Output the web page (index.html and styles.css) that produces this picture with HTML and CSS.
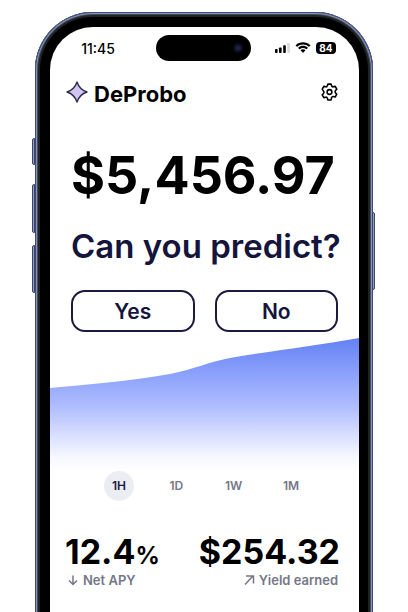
FILE: index.html
```html
<!DOCTYPE html>
<html lang="en">
<head>
<meta charset="utf-8">
<meta name="viewport" content="width=device-width, initial-scale=1">
<title>DeProbo</title>
<link rel="stylesheet" href="styles.css">
</head>
<body>
<div class="phone">
  <span class="side-key key-action"></span>
  <span class="side-key key-up"></span>
  <span class="side-key key-down"></span>
  <span class="side-key key-power"></span>
  <main class="screen">
    <div class="status">
      <time class="clock">11:45</time>
      <div class="island"><span class="camera"></span></div>
      <div class="indicators">
        <svg class="signal" viewBox="0 0 15 10" aria-hidden="true">
          <rect x="0" y="6" width="2.6" height="4" rx=".8"/>
          <rect x="4" y="4.5" width="2.6" height="5.5" rx=".8"/>
          <rect x="8.200" y="2.300" width="2.600" height="7.700" rx=".8"/>
          <rect x="12.300" y="0" width="2.600" height="10" rx=".8" fill="#d9d9db"/>
        </svg>
        <svg class="wifi" viewBox="0 0 16 12" aria-hidden="true">
          <path d="M8 2.500c2.200 0 4.200.9 5.700 2.300.1.100.3.100.4 0l1.200-1.200c.1-.1.100-.3 0-.4C11.300-.6 4.700-.6.7 3.200c-.1.100-.1.300 0 .4l1.200 1.200c.1.100.3.100.4 0C3.800 3.400 5.800 2.500 8 2.500z"/>
          <path d="M8 6.100c1.200 0 2.300.4 3.200 1.200.1.100.3.100.4 0l1.200-1.200c.1-.1.100-.3 0-.4-2.700-2.500-6.900-2.500-9.600 0-.1.100-.1.300 0 .4l1.200 1.200c.1.100.3.100.4 0C5.700 6.500 6.800 6.100 8 6.100z"/>
          <path d="M10.300 8.500c.1-.1.100-.3 0-.4-1.300-1.100-3.300-1.100-4.600 0-.1.100-.1.300 0 .4l2.100 2.200c.1.100.3.100.4 0z"/>
        </svg>
        <span class="battery">84</span>
      </div>
    </div>

    <header class="header">
      <div class="brand">
        <svg class="logo" viewBox="0 0 22 22" aria-hidden="true">
          <path d="M11 1C12.800 6.500 15.500 9.200 21 11 15.500 12.800 12.800 15.500 11 21 9.200 15.500 6.500 12.800 1 11 6.500 9.200 9.200 6.500 11 1z"/>
        </svg>
        <span class="brand-name">DeProbo</span>
      </div>
      <button class="settings" type="button" aria-label="Settings">
        <svg viewBox="0 0 24 24" aria-hidden="true">
          <path d="M9.300 4.200 10 2h4l.7 2.200c.3.900 1.200 1.400 2.100 1.200l2.400-.5 2 3.500-1.600 1.700c-.7.800-.7 2.200 0 3l1.600 1.700-2 3.500-2.400-.5c-.9-.2-1.800.3-2.100 1.200L14 22h-4l-.7-2.200c-.3-.9-1.200-1.400-2.100-1.200l-2.400.5-2-3.500 1.600-1.700c.7-.8.7-2.200 0-3L2.800 8.400l2-3.500 2.400.5c.9.200 1.800-.3 2.100-1.200z"/>
          <circle cx="12" cy="12" r="3"/>
        </svg>
      </button>
    </header>

    <section class="predict">
      <p class="balance">$5,456.97</p>
      <h1 class="question">Can you predict?</h1>
      <div class="answers">
        <button class="answer" type="button">Yes</button>
        <button class="answer" type="button">No</button>
      </div>
    </section>

    <svg class="chart" viewBox="0 0 309 133" preserveAspectRatio="none" role="img" aria-label="Balance trend">
      <defs>
        <linearGradient id="fade" x1="0" y1="0" x2="0" y2="1">
          <stop offset="0" stop-color="#6381f3"/>
          <stop offset=".2" stop-color="#8199fa"/>
          <stop offset=".5" stop-color="#adbbff"/>
          <stop offset=".75" stop-color="#dce2ff"/>
          <stop offset=".9" stop-color="#f7f8ff"/>
          <stop offset="1" stop-color="#ffffff"/>
        </linearGradient>
      </defs>
      <path fill="url(#fade)" d="M0 50C35 47 80 43 120 36 145 31 158 24 180 20 220 13 265 8 309 0V133H0z"/>
    </svg>

    <nav class="ranges" aria-label="Time range">
      <button class="range active" type="button">1H</button>
      <button class="range" type="button">1D</button>
      <button class="range" type="button">1W</button>
      <button class="range" type="button">1M</button>
    </nav>

    <section class="stats">
      <div class="stat">
        <p class="value">12.4<span class="percent">%</span></p>
        <p class="label">
          <svg viewBox="0 0 12 12" aria-hidden="true"><path d="M6 1.500v9M2 6.500l4 4 4-4"/></svg>
          Net APY
        </p>
      </div>
      <div class="stat end">
        <p class="value">$254.32</p>
        <p class="label">
          <svg viewBox="0 0 12 12" aria-hidden="true"><path d="M2 10.500l8-8.500M3 2h7.500v7.500"/></svg>
          Yield earned
        </p>
      </div>
    </section>
  </main>
</div>
</body>
</html>
```
FILE: styles.css
```css
* { box-sizing: border-box; }

body {
  margin: 0;
  height: 100vh;
  overflow: hidden;
  background: #fff;
  color: #000;
  font-family: Inter, "Liberation Sans", sans-serif;
}

p, h1 { margin: 0; }

button {
  padding: 0;
  border: 0;
  background: none;
  color: inherit;
  font: inherit;
  cursor: pointer;
}

svg { display: block; flex: none; }

.phone {
  position: relative;
  min-height: 100vh;
  margin: 12px 35px 0;
  padding: 15px 14px 0 15px;
  border-radius: 58px 58px 0 0;
  background: #000;
  box-shadow: inset 0 0 0 1px #3f4a80, inset 0 0 0 2px #8895b4, inset 0 0 0 3px #454d56, inset 0 0 0 5px #1f2326;
}

.side-key {
  position: absolute;
  left: -3px;
  width: 3px;
  border: 1px solid #3d4668;
  border-radius: 2px 0 0 2px;
  background: #919dc8;
}
.key-action { top: 126px; height: 27px; }
.key-up { top: 172px; height: 49px; }
.key-down { top: 233px; height: 48px; }
.key-power {
  top: 200px;
  right: -2px;
  left: auto;
  height: 78px;
  border-radius: 0 2px 2px 0;
}

.screen {
  min-height: 100vh;
  overflow: hidden;
  border-radius: 43px 43px 0 0;
  background: #fff;
}

.status {
  display: grid;
  grid-template-columns: 1fr 95px 1fr;
  align-items: center;
  padding: 8px 2px 0 0;
}
.clock {
  justify-self: center;
  padding-right: 10px;
  font-size: 14px;
  font-weight: 500;
}
.island {
  display: flex;
  align-items: center;
  justify-content: flex-end;
  height: 26px;
  padding-right: 8px;
  border-radius: 13px;
  background: #000;
}
.camera {
  width: 10px;
  height: 10px;
  border-radius: 50%;
  background: radial-gradient(circle, #1c2448 15%, #090b18 60%, #05060c);
}
.indicators {
  display: flex;
  align-items: center;
  justify-content: flex-end;
  gap: 5px;
  padding-right: 21px;
}
.signal { width: 15px; height: 10px; }
.wifi { width: 16px; height: 12px; }
.battery {
  width: 20px;
  border-radius: 4px;
  background: #000;
  color: #fff;
  font-size: 10px;
  font-weight: 700;
  line-height: 12px;
  text-align: center;
}

.header {
  display: flex;
  align-items: flex-start;
  justify-content: space-between;
  padding: 20px 20px 0 16px;
}
.brand { display: flex; align-items: flex-start; gap: 6px; }
.logo { width: 22px; height: 22px; }
.logo path {
  fill: #cfc5f0;
  stroke: #2e2a4c;
  stroke-width: 1.4;
  stroke-linejoin: round;
}
.brand-name {
  font-size: 22px;
  font-weight: 700;
  line-height: 26px;
}
.settings svg {
  width: 19px;
  height: 22px;
  fill: none;
  stroke: #000;
  stroke-width: 2;
  stroke-linejoin: round;
}

.predict { padding: 37px 21px 0; }
.balance {
  font-size: 52px;
  font-weight: 700;
  line-height: 64px;
  white-space: nowrap;
}
.question {
  padding-top: 16px;
  color: #14143c;
  font-size: 33px;
  font-weight: 600;
  line-height: 44px;
  white-space: nowrap;
}
.answers {
  display: grid;
  grid-template-columns: 1fr 1fr;
  gap: 20px;
  padding-top: 22px;
}
.answer {
  height: 42px;
  border: 2px solid #1c1a3e;
  border-radius: 14px;
  color: #14143c;
  font-size: 21px;
  font-weight: 600;
}

.chart {
  width: 100%;
  height: 133px;
  margin-top: 6px;
}

.ranges {
  display: flex;
  justify-content: space-between;
  padding: 0 53px 0 54px;
}
.range {
  width: 30px;
  height: 30px;
  border-radius: 50%;
  color: #757789;
  font-size: 12px;
  font-weight: 600;
  line-height: 28px;
}
.range.active { background: #ececf3; color: #1c1a3e; }

.stats {
  display: flex;
  justify-content: space-between;
  padding: 31px 19px 0 15px;
}
.value {
  font-size: 34px;
  font-weight: 700;
  line-height: 40px;
}
.percent { font-size: 24px; line-height: 1; }
.label {
  display: flex;
  align-items: center;
  gap: 4px;
  padding: 0 2px;
  color: #757789;
  font-size: 13px;
  font-weight: 600;
  line-height: 16px;
}
.label svg {
  width: 12px;
  height: 12px;
  fill: none;
  stroke: currentColor;
  stroke-width: 1.5;
}
.end .label { justify-content: flex-end; }
```
